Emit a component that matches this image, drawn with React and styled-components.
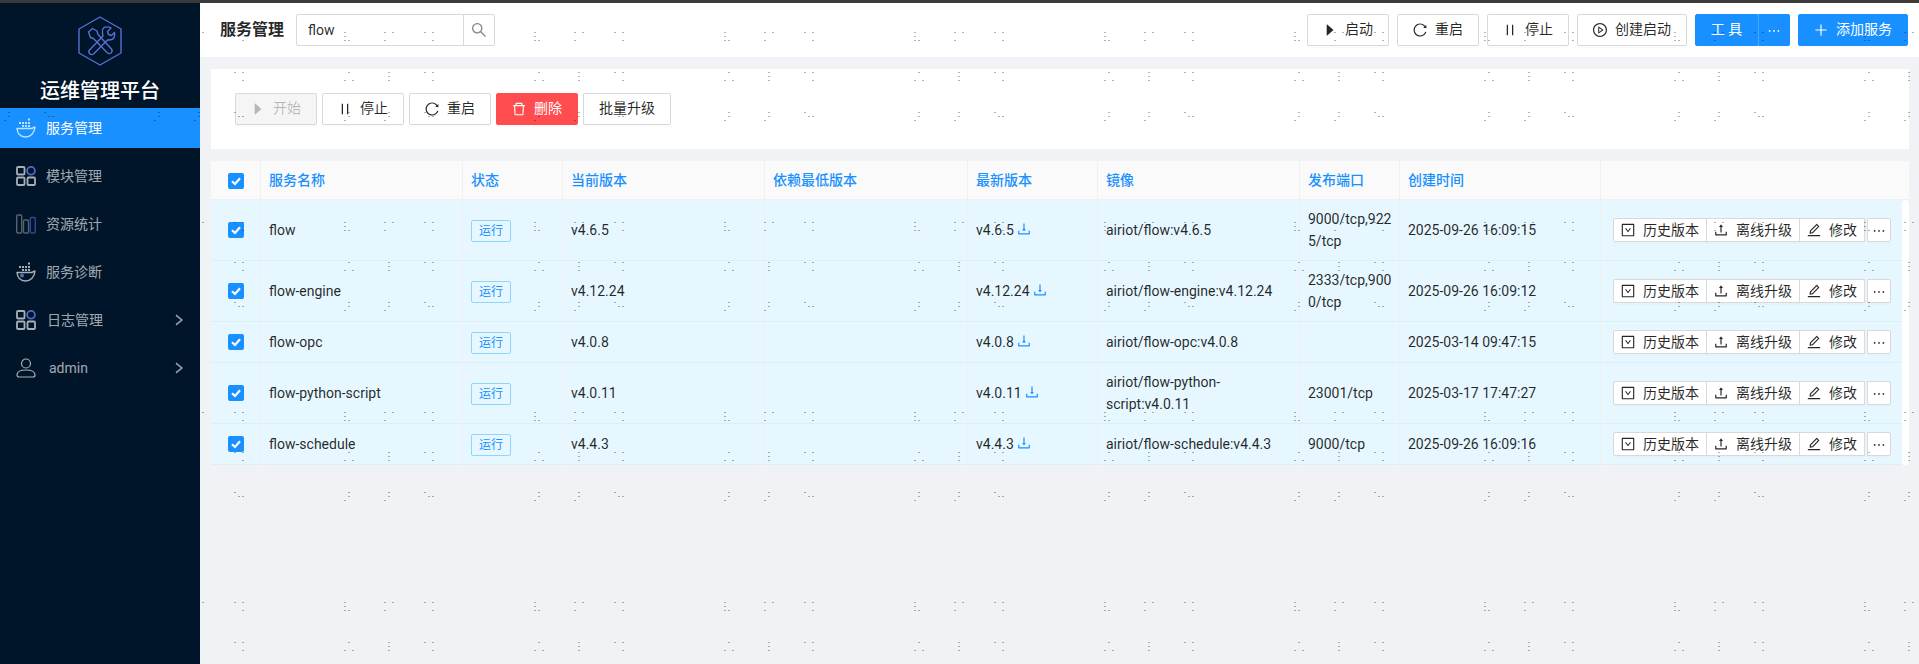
import React from 'react';
import styled, { createGlobalStyle } from 'styled-components';
import {
  AiFillCaretRight,
  AiOutlinePause,
  AiOutlineReload,
  AiOutlineDelete,
  AiOutlinePlayCircle,
  AiOutlineSearch,
  AiOutlineEllipsis,
  AiOutlinePlus,
  AiOutlineDownload,
  AiOutlineUpload,
  AiOutlineEdit,
  AiOutlineDownSquare,
  AiOutlineRight,
} from 'react-icons/ai';

const FONT = `Roboto, "Noto Sans CJK SC", sans-serif`;

const GlobalStyle = createGlobalStyle`
  html, body { margin: 0; padding: 0; height: 100%; background: #f0f2f5; }
  body { font-family: ${FONT}; font-size: 14px; color: rgba(0, 0, 0, 0.85); }
  * { box-sizing: border-box; }
`;

const Page = styled.div`
  position: relative;
  width: 100%;
  height: 664px;
  overflow: hidden;
  display: flex;
  flex-direction: column;
`;

const TopStrip = styled.div`
  height: 3px;
  flex: none;
  background: #3a3a3a;
`;

const Body = styled.div`
  flex: 1;
  display: flex;
  min-height: 0;
`;

const Sidebar = styled.aside`
  width: 200px;
  flex: none;
  background: #001529;
  display: flex;
  flex-direction: column;
`;

const Brand = styled.div`
  height: 105px;
  padding-top: 13px;
  display: flex;
  flex-direction: column;
  align-items: center;
`;

const BrandTitle = styled.div`
  margin-top: 11px;
  font-size: 20px;
  line-height: 28px;
  font-weight: 500;
  color: #fff;
`;

const Menu = styled.nav`
  display: flex;
  flex-direction: column;
  gap: 8px;
`;

const MenuItem = styled.div`
  height: 40px;
  display: flex;
  align-items: center;
  padding: 0 16px;
  background: ${(p) => (p.$active ? '#1890ff' : 'transparent')};
  color: ${(p) => (p.$active ? '#fff' : 'rgba(255, 255, 255, 0.65)')};
  svg.menu-icon { flex: none; }
`;

const MenuLabel = styled.span`
  margin-left: ${(p) => p.$gap || 10}px;
  padding-bottom: ${(p) => (p.$latin ? 0 : 2)}px;
  flex: 1;
`;

const MenuArrow = styled(AiOutlineRight)`
  font-size: 14px;
  margin-right: -2px;
  color: rgba(255, 255, 255, 0.55);
  stroke: currentColor;
  stroke-width: 40;
`;

const Content = styled.main`
  flex: 1;
  min-width: 0;
  display: flex;
  flex-direction: column;
`;

const Header = styled.header`
  height: 54px;
  flex: none;
  background: #fff;
  display: flex;
  align-items: center;
  padding: 0 11px 0 20px;
`;

const PageTitle = styled.h1`
  margin: 0 12px 0 0;
  font-size: 16px;
  line-height: 24px;
  font-weight: 600;
`;

const SearchBox = styled.div`
  display: flex;
  height: 32px;
`;

const SearchInput = styled.input`
  width: 168px;
  height: 32px;
  padding: 0 11px;
  border: 1px solid #d9d9d9;
  border-radius: 2px 0 0 2px;
  font: inherit;
  color: rgba(0, 0, 0, 0.85);
  outline: none;
`;

const SearchButton = styled.button`
  width: 32px;
  height: 32px;
  margin-left: -1px;
  padding: 0;
  display: flex;
  align-items: center;
  justify-content: center;
  background: #fff;
  border: 1px solid #d9d9d9;
  border-radius: 0 2px 2px 0;
  color: rgba(0, 0, 0, 0.45);
  font-size: 18px;
`;

const HeaderActions = styled.div`
  margin-left: auto;
  display: flex;
  gap: 8px;
`;

const Button = styled.button`
  height: 32px;
  padding: 0 15px 2px;
  display: inline-flex;
  align-items: center;
  justify-content: center;
  gap: 8px;
  font-family: inherit;
  font-size: 14px;
  line-height: 22px;
  border-radius: 2px;
  border: 1px solid #d9d9d9;
  background: #fff;
  color: rgba(0, 0, 0, 0.85);
  box-shadow: 0 2px 0 rgba(0, 0, 0, 0.015);
  white-space: nowrap;
  svg { font-size: 16px; margin: 2px -1px 0; flex: none; }

  ${(p) => p.$variant === 'primary' && `
    background: #1890ff;
    border-color: #1890ff;
    color: #fff;
  `}
  ${(p) => p.$variant === 'danger' && `
    background: #ff4d4f;
    border-color: #ff4d4f;
    color: #fff;
  `}
  &:disabled {
    background: #f5f5f5;
    color: rgba(0, 0, 0, 0.25);
  }
`;

const ToolGroup = styled.div`
  display: flex;
`;

const ToolButton = styled(Button)`
  width: 63px;
  padding: 0 0 2px;
  border-radius: 2px 0 0 2px;
  letter-spacing: 3.5px;
  text-indent: 3.5px;
`;

const ToolMore = styled(Button)`
  width: 32px;
  padding: 0;
  border-radius: 0 2px 2px 0;
  border-left-color: #40a9ff;
`;

const Main = styled.div`
  flex: 1;
  padding: 12px 10px 0 11px;
  display: flex;
  flex-direction: column;
  gap: 12px;
`;

const ToolbarCard = styled.section`
  height: 80px;
  padding: 24px;
  background: #fff;
  display: flex;
  gap: 5px;
`;

const TableHead = styled.table`
  width: 1698px;
  table-layout: fixed;
  border-collapse: separate;
  border-spacing: 0;
`;

const TableBodyWrap = styled.div`
  display: flex;
  align-items: stretch;
`;

const ScrollThumb = styled.div`
  width: 7px;
  flex: none;
  background: #fff;
  border-radius: 4px;
`;

const TableBody = styled.table`
  width: 1691px;
  table-layout: fixed;
  border-collapse: separate;
  border-spacing: 0;
  flex: none;
`;

const Th = styled.th`
  height: 39px;
  padding: 0 8px 3px;
  text-align: left;
  font-weight: 500;
  color: #1890ff;
  background: #fafafa;
  border-right: 1px solid #f0f0f0;
  border-bottom: 1px solid #f0f0f0;
  &:last-child { border-right: 0; }
`;

const CheckTh = styled(Th)`
  padding: 0 8px;
  text-align: center;
`;

const Row = styled.tr`
  background: #e6f7ff;
`;

const Td = styled.td`
  padding: 8px ${(p) => (p.$breakAll ? 6 : 8)}px 8px 8px;
  line-height: 22px;
  border-right: 1px solid #f0f0f0;
  border-bottom: 1px solid #dceef8;
  word-break: ${(p) => (p.$breakAll ? 'break-all' : 'normal')};
  &:last-child { border-right: 0; }
`;

const CheckTd = styled(Td)`
  padding-bottom: 10px;
  text-align: center;
`;

const Check = styled.span`
  width: 16px;
  height: 16px;
  display: inline-flex;
  align-items: center;
  justify-content: center;
  vertical-align: middle;
  background: #1890ff;
  border-radius: 2px;
`;

const Tag = styled.span`
  display: inline-block;
  height: 22px;
  padding: 0 7px;
  font-size: 12px;
  line-height: 20px;
  color: #1890ff;
  background: #e6f7ff;
  border: 1px solid #91d5ff;
  border-radius: 2px;
  vertical-align: middle;
`;

const DownloadLink = styled(AiOutlineDownload)`
  margin-left: 2px;
  font-size: 16px;
  color: #1890ff;
  vertical-align: -2px;
`;

const RowActions = styled.div`
  display: flex;
  margin-left: 4px;
`;

const SmallButton = styled.button`
  height: 24px;
  padding: 0 7px 2px;
  margin-left: -1px;
  display: inline-flex;
  align-items: center;
  gap: 8px;
  font-family: inherit;
  font-size: 14px;
  color: rgba(0, 0, 0, 0.85);
  background: #fff;
  border: 1px solid #d9d9d9;
  white-space: nowrap;
  box-shadow: 0 2px 0 rgba(0, 0, 0, 0.015);
  svg { font-size: 16px; margin: 2px -1px 0; flex: none; }
  &:first-child { margin-left: 0; border-radius: 2px 0 0 2px; }
  &:last-child { border-radius: 0 2px 2px 0; }
`;

const MoreButton = styled(SmallButton)`
  width: 24px;
  margin-left: 2px !important;
  padding: 0;
  justify-content: center;
  border-radius: 2px;
`;

const WatermarkLayer = styled.svg`
  position: absolute;
  top: 0;
  left: 0;
  width: 100%;
  height: 100%;
  pointer-events: none;
`;

// the tile is 190px square, three groups across and three down, each on a 4px dot grid
const DOT_GROUPS = [
  { x: 154, y: 32, dots: [[0, 0], [0, 1], [0, 2], [1, 2]] },
  { x: 4, y: 32, dots: [[0, 0], [2, 0], [0, 2]] },
  { x: 44, y: 32, dots: [[0, 0], [2, 0], [2, 2]] },
  { x: 154, y: 72, dots: [[1, 0], [0, 2], [2, 2]] },
  { x: 4, y: 72, dots: [[1, 0], [1, 1], [1, 2]] },
  { x: 44, y: 72, dots: [[0, 0], [2, 0], [2, 2]] },
  { x: 154, y: 112, dots: [[1, 0], [1, 1], [0, 2]] },
  { x: 4, y: 112, dots: [[1, 0], [1, 1], [0, 2]] },
  { x: 44, y: 112, dots: [[0, 0], [1, 1], [2, 1]] },
];

function Watermark() {
  return (
    <WatermarkLayer aria-hidden="true">
      <defs>
        <pattern id="wm" width="190" height="190" patternUnits="userSpaceOnUse">
          {DOT_GROUPS.map((g) =>
            g.dots.map(([cx, cy]) => (
              <rect
                key={`${g.x}-${g.y}-${cx}-${cy}`}
                x={g.x + cx * 4}
                y={g.y + cy * 4}
                width="2"
                height="1"
                fill="rgba(0,0,0,0.3)"
              />
            ))
          )}
        </pattern>
      </defs>
      <rect width="100%" height="100%" fill="url(#wm)" />
    </WatermarkLayer>
  );
}

function LogoIcon() {
  return (
    <svg width="44" height="50" viewBox="0 0 44 50" fill="none" stroke="#5571d6" strokeWidth="1.4" strokeLinejoin="round">
      <path d="M22 1 L43 13 V37 L22 49 L1 37 V13 Z" />
      {/* screwdriver */}
      <path d="M10.5 16 L14.5 12.5 L19 15 L20 18.5 L33.5 33 Q35 35 33 37 Q31 38.5 29 36.5 L15.5 22.5 L12.5 21.5 Z" />
      {/* wrench */}
      <path d="M26 11.5 C30 10 33 12 33 12 L29.5 15.5 L30.5 18.5 L33.5 19.5 L36.5 16.5 C37.5 20 36 24 31 24 L29.5 24 L15.5 38 Q13.5 39.5 11.5 37.5 Q10 35.5 11.5 34 L25 20 C24 16 24 13 26 11.5 Z" />
    </svg>
  );
}

function DockerIcon({ active }) {
  const c = active ? '#bfe1ff' : '#a9afb6';
  return (
    <svg className="menu-icon" width="20" height="20" viewBox="0 0 20 20" fill="none">
      <g fill={c}>
        <rect x="12" y="0.5" width="2" height="2" />
        <rect x="3" y="4" width="2" height="2" />
        <rect x="6" y="4" width="2" height="2" />
        <rect x="9" y="4" width="2" height="2" />
        <rect x="12" y="4" width="2" height="2" />
        <rect x="6" y="7" width="2" height="2" />
        <rect x="9" y="7" width="2" height="2" />
        <rect x="12" y="7" width="2" height="2" />
      </g>
      <path d="M1 10.5 H15.5 L19 9 C18.5 15 14.5 19 9.5 19 C5 19 1.5 16 1 10.5 Z" stroke={c} strokeWidth="1.4" strokeLinejoin="round" />
      {!active && <circle cx="6" cy="13.5" r="2" fill="#4f6bc0" />}
    </svg>
  );
}

function GridIcon() {
  return (
    <svg className="menu-icon" width="20" height="20" viewBox="0 0 20 20" fill="none" stroke="#a9afb6" strokeWidth="1.8">
      <rect x="1" y="1" width="7.5" height="7.5" rx="1" />
      <circle cx="15" cy="4.8" r="3.9" stroke="#4f6bc0" />
      <rect x="1" y="11.5" width="7.5" height="7.5" rx="1" />
      <rect x="11.5" y="11.5" width="7.5" height="7.5" rx="1" />
    </svg>
  );
}

function BarsIcon() {
  return (
    <svg className="menu-icon" width="20" height="20" viewBox="0 0 20 20" fill="none" strokeWidth="1.4">
      <rect x="0.7" y="1" width="5" height="18" rx="1.2" stroke="#56626f" />
      <rect x="7.5" y="6" width="5" height="13" rx="1.2" stroke="#56626f" />
      <rect x="14.3" y="3.5" width="5" height="15.5" rx="1.2" stroke="#2f4b8f" />
    </svg>
  );
}

function UserIcon() {
  return (
    <svg className="menu-icon" width="20" height="20" viewBox="0 0 20 20" fill="none" stroke="#a9afb6" strokeWidth="1.2">
      <circle cx="10" cy="5.5" r="4.5" />
      <path d="M1 17 C1 13.5 5 12 10 12 C15 12 19 13.5 19 17 C19 18.5 18 19 17 19 H3 C2 19 1 18.5 1 17 Z" />
    </svg>
  );
}

function CheckBox() {
  return (
    <Check>
      <svg width="12" height="12" viewBox="0 0 12 12" fill="none" stroke="#fff" strokeWidth="2.2">
        <path d="M2 6.2 L5 9 L10 3.2" />
      </svg>
    </Check>
  );
}

const COLUMNS = [
  { title: '服务名称', width: 202 },
  { title: '状态', width: 100 },
  { title: '当前版本', width: 202 },
  { title: '依赖最低版本', width: 203 },
  { title: '最新版本', width: 130 },
  { title: '镜像', width: 202 },
  { title: '发布端口', width: 100 },
  { title: '创建时间', width: 201 },
];

const SERVICES = [
  { name: 'flow', version: 'v4.6.5', image: 'airiot/flow:v4.6.5', ports: '9000/tcp,9225/tcp', created: '2025-09-26 16:09:15' },
  { name: 'flow-engine', version: 'v4.12.24', image: 'airiot/flow-engine:v4.12.24', ports: '2333/tcp,9000/tcp', created: '2025-09-26 16:09:12' },
  { name: 'flow-opc', version: 'v4.0.8', image: 'airiot/flow-opc:v4.0.8', ports: '', created: '2025-03-14 09:47:15' },
  { name: 'flow-python-script', version: 'v4.0.11', image: 'airiot/flow-python-script:v4.0.11', ports: '23001/tcp', created: '2025-03-17 17:47:27' },
  { name: 'flow-schedule', version: 'v4.4.3', image: 'airiot/flow-schedule:v4.4.3', ports: '9000/tcp', created: '2025-09-26 16:09:16' },
];

function Cols({ last }) {
  return (
    <colgroup>
      <col style={{ width: 50 }} />
      {COLUMNS.map((c) => (
        <col key={c.title} style={{ width: c.width }} />
      ))}
      <col style={{ width: last }} />
    </colgroup>
  );
}

export default function App() {
  return (
    <Page>
      <GlobalStyle />
      <TopStrip />
      <Body>
        <Sidebar>
          <Brand>
            <LogoIcon />
            <BrandTitle>运维管理平台</BrandTitle>
          </Brand>
          <Menu>
            <MenuItem $active><DockerIcon active /><MenuLabel>服务管理</MenuLabel></MenuItem>
            <MenuItem><GridIcon /><MenuLabel>模块管理</MenuLabel></MenuItem>
            <MenuItem><BarsIcon /><MenuLabel>资源统计</MenuLabel></MenuItem>
            <MenuItem><DockerIcon /><MenuLabel>服务诊断</MenuLabel></MenuItem>
            <MenuItem><GridIcon /><MenuLabel $gap={11}>日志管理</MenuLabel><MenuArrow /></MenuItem>
            <MenuItem><UserIcon /><MenuLabel $gap={13} $latin>admin</MenuLabel><MenuArrow /></MenuItem>
          </Menu>
        </Sidebar>

        <Content>
          <Header>
            <PageTitle>服务管理</PageTitle>
            <SearchBox>
              <SearchInput defaultValue="flow" />
              <SearchButton><AiOutlineSearch /></SearchButton>
            </SearchBox>
            <HeaderActions>
              <Button><AiFillCaretRight />启动</Button>
              <Button><AiOutlineReload />重启</Button>
              <Button><AiOutlinePause />停止</Button>
              <Button><AiOutlinePlayCircle />创建启动</Button>
              <ToolGroup>
                <ToolButton $variant="primary">工具</ToolButton>
                <ToolMore $variant="primary"><AiOutlineEllipsis /></ToolMore>
              </ToolGroup>
              <Button $variant="primary"><AiOutlinePlus />添加服务</Button>
            </HeaderActions>
          </Header>

          <Main>
            <ToolbarCard>
              <Button disabled><AiFillCaretRight />开始</Button>
              <Button><AiOutlinePause />停止</Button>
              <Button><AiOutlineReload />重启</Button>
              <Button $variant="danger"><AiOutlineDelete />删除</Button>
              <Button>批量升级</Button>
            </ToolbarCard>

            <div>
              <TableHead>
                <Cols last={308} />
                <thead>
                  <tr>
                    <CheckTh><CheckBox /></CheckTh>
                    {COLUMNS.map((c) => (
                      <Th key={c.title}>{c.title}</Th>
                    ))}
                    <Th />
                  </tr>
                </thead>
              </TableHead>
              <TableBodyWrap>
                <TableBody>
                  <Cols last={301} />
                  <tbody>
                    {SERVICES.map((s) => (
                      <Row key={s.name}>
                        <CheckTd><CheckBox /></CheckTd>
                        <Td>{s.name}</Td>
                        <Td><Tag>运行</Tag></Td>
                        <Td>{s.version}</Td>
                        <Td />
                        <Td>{s.version}<DownloadLink /></Td>
                        <Td>{s.image}</Td>
                        <Td $breakAll>{s.ports}</Td>
                        <Td>{s.created}</Td>
                        <Td>
                          <RowActions>
                            <SmallButton><AiOutlineDownSquare />历史版本</SmallButton>
                            <SmallButton><AiOutlineUpload />离线升级</SmallButton>
                            <SmallButton><AiOutlineEdit />修改</SmallButton>
                            <MoreButton><AiOutlineEllipsis /></MoreButton>
                          </RowActions>
                        </Td>
                      </Row>
                    ))}
                  </tbody>
                </TableBody>
                <ScrollThumb />
              </TableBodyWrap>
            </div>
          </Main>
        </Content>
      </Body>
      <Watermark />
    </Page>
  );
}
